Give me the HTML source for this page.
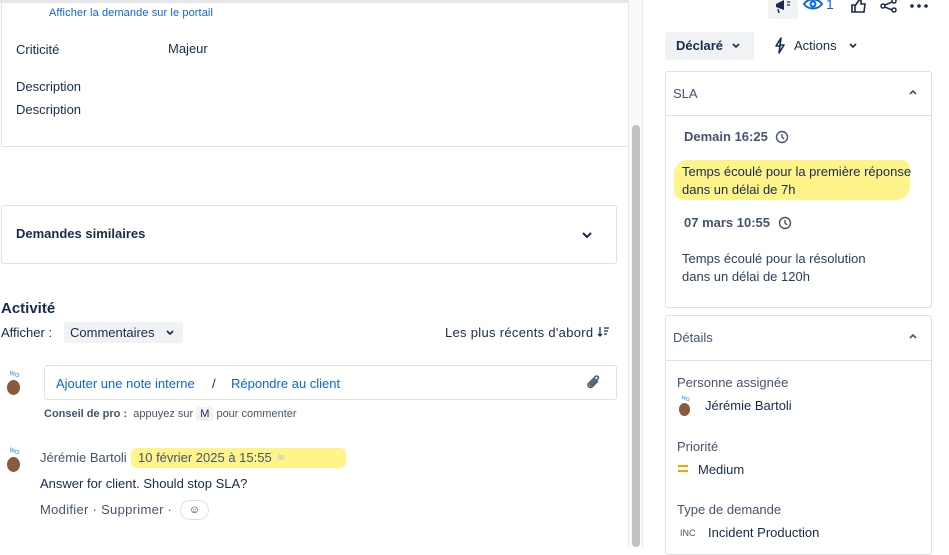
<!DOCTYPE html>
<html><head><meta charset="utf-8"><style>
*{box-sizing:border-box;margin:0;padding:0}
body{width:949px;height:547px;overflow:hidden;background:#fff;font-family:"Liberation Sans",sans-serif;color:#172b4d;position:relative;font-size:13px}
.a{position:absolute;white-space:nowrap}
.card{position:absolute;border:1px solid #dfe1e6;border-radius:3px;background:#fff}
.blue{color:#0c66e4}
.mut{color:#44546f}
.hl{background:#fff48a;border-radius:6px}
</style></head><body>
<div class="a" style="left:0;top:0;width:628px;height:3px;background:#e6e7ea"></div>
<div class="a" style="left:1px;top:3px;width:1px;height:143px;background:#dfe1e6"></div>
<div class="a" style="left:1px;top:146px;width:627px;height:1px;background:#dfe1e6"></div>
<div class="a blue" style="left:49px;top:7px;font-size:11px;letter-spacing:0.1px">Afficher la demande sur le portail</div>
<div class="a" style="left:16px;top:42px">Criticité</div>
<div class="a" style="left:168px;top:41px">Majeur</div>
<div class="a" style="left:16px;top:79px">Description</div>
<div class="a" style="left:16px;top:102px">Description</div>
<div class="a" style="left:628px;top:0;width:15px;height:547px;background:#fafafa;border-left:1px solid #e8e8e8;border-right:1px solid #e8e8e8"></div>
<div class="a" style="left:632px;top:125px;width:8px;height:422px;background:#c2c2c2;border-radius:4px"></div>
<div class="card" style="left:1px;top:205px;width:616px;height:59px"></div>
<div class="a" style="left:16px;top:226px;font-weight:bold">Demandes similaires</div>
<svg class="a" style="left:581px;top:230px" width="12" height="10" viewBox="0 0 12 10"><path d="M2 3l4 4 4-4" stroke="#172b4d" stroke-width="2" fill="none"/></svg>
<div class="a" style="left:1px;top:300px;font-size:15px;font-weight:bold">Activité</div>
<div class="a" style="left:1px;top:325px">Afficher :</div>
<div class="a" style="left:64px;top:322px;width:119px;height:21px;background:#f1f2f4;border-radius:3px"></div>
<div class="a" style="left:70px;top:325px">Commentaires</div>
<svg class="a" style="left:165px;top:329px" width="10" height="8" viewBox="0 0 10 8"><path d="M2 2l3 3 3-3" stroke="#172b4d" stroke-width="1.6" fill="none"/></svg>
<div class="a" style="left:445px;top:325px;letter-spacing:0.3px">Les plus récents d'abord</div>
<svg class="a" style="left:597px;top:326px" width="13" height="12" viewBox="0 0 13 12"><path d="M3 1v9M1 8l2 2 2-2M7 2h5M7 5h4M7 8h3" stroke="#172b4d" stroke-width="1.3" fill="none"/></svg>
<div class="a" style="left:5px;top:372px;width:18px;height:24px"><div style="position:absolute;left:2px;top:8px;width:13px;height:15px;border-radius:50%;background:#8a5a3c"></div><div style="position:absolute;left:4px;top:0;font-size:6px;color:#5aa7e8;font-weight:bold;transform:rotate(20deg)">WO</div></div>
<div class="card" style="left:44px;top:365px;width:573px;height:35px"></div>
<div class="a blue" style="left:56px;top:376px">Ajouter une note interne</div>
<div class="a" style="left:212px;top:376px">/</div>
<div class="a blue" style="left:231px;top:376px">Répondre au client</div>
<svg class="a" style="left:585px;top:374px" width="18" height="18" viewBox="0 0 18 18"><path d="M13 7l-6 6a2.5 2.5 0 01-3.5-3.5l7-7a1.7 1.7 0 012.4 2.4l-6.5 6.5a.8.8 0 01-1.2-1.2l5.5-5.5" stroke="#44546f" stroke-width="1.5" fill="none"/></svg>
<div class="a mut" style="left:44px;top:408px;font-size:11px"><b>Conseil de pro :</b>&nbsp; appuyez sur <span style="background:#f1f2f4;padding:1px 4px;border-radius:2px;color:#172b4d">M</span> pour commenter</div>
<div class="a" style="left:5px;top:449px;width:18px;height:24px"><div style="position:absolute;left:2px;top:8px;width:13px;height:15px;border-radius:50%;background:#8a5a3c"></div><div style="position:absolute;left:4px;top:0;font-size:6px;color:#5aa7e8;font-weight:bold;transform:rotate(20deg)">WO</div></div>
<div class="a mut" style="left:40px;top:450px">Jérémie Bartoli</div>
<div class="a hl" style="left:131px;top:448px;width:215px;height:20px"></div>
<div class="a mut" style="left:138px;top:450px">10 février 2025 à 15:55 <span style="color:#c9cfd6">⚭</span></div>
<div class="a" style="left:40px;top:476px">Answer for client. Should stop SLA?</div>
<div class="a mut" style="left:40px;top:502px;letter-spacing:0.3px">Modifier · Supprimer ·</div>
<div class="a" style="left:180px;top:500px;width:29px;height:20px;border:1px solid #dfe1e6;border-radius:10px;text-align:center;font-size:11px;line-height:18px">☺</div>
<div class="a" style="left:768px;top:0;width:30px;height:19px;background:#f1f2f4;border-radius:3px"></div>
<svg class="a" style="left:774px;top:0" width="18" height="15" viewBox="0 0 18 15"><path d="M2 4l8-4v10l-8-3z" fill="#172b4d"/><path d="M4 9l1 4" stroke="#172b4d" stroke-width="1.5"/><path d="M13 2h3M13 5h3" stroke="#172b4d" stroke-width="1.2"/></svg>
<svg class="a" style="left:803px;top:0" width="22" height="12" viewBox="0 0 22 12"><path d="M1 4c4-6 14-6 18 0c-4 6-14 6-18 0z" stroke="#0c66e4" stroke-width="2" fill="none"/><circle cx="10" cy="4" r="2.5" stroke="#0c66e4" stroke-width="2" fill="none"/></svg>
<div class="a blue" style="left:826px;top:-4px;font-size:14px">1</div>
<svg class="a" style="left:851px;top:0" width="16" height="13" viewBox="0 0 16 13"><path d="M1 5h3v7H1zM4 6l4-6h2v4h4l-1 8H4" stroke="#172b4d" stroke-width="1.6" fill="none"/></svg>
<svg class="a" style="left:880px;top:0" width="18" height="13" viewBox="0 0 18 13"><circle cx="14" cy="1" r="2" stroke="#172b4d" stroke-width="1.5" fill="none"/><circle cx="3" cy="6" r="2" stroke="#172b4d" stroke-width="1.5" fill="none"/><circle cx="14" cy="10" r="2" stroke="#172b4d" stroke-width="1.5" fill="none"/><path d="M5 5l7-3M5 7l7 3" stroke="#172b4d" stroke-width="1.5"/></svg>
<svg class="a" style="left:909px;top:3px" width="20" height="6" viewBox="0 0 20 6"><circle cx="3" cy="3" r="1.8" fill="#172b4d"/><circle cx="10" cy="3" r="1.8" fill="#172b4d"/><circle cx="17" cy="3" r="1.8" fill="#172b4d"/></svg>
<div class="a" style="left:665px;top:32px;width:89px;height:28px;background:#f1f2f4;border-radius:3px"></div>
<div class="a" style="left:676px;top:38px;font-weight:bold">Déclaré</div>
<svg class="a" style="left:731px;top:42px" width="10" height="8" viewBox="0 0 10 8"><path d="M2 2l3 3 3-3" stroke="#172b4d" stroke-width="1.6" fill="none"/></svg>
<svg class="a" style="left:773px;top:37px" width="14" height="17" viewBox="0 0 14 17"><path d="M8 1L3 9h4l-1 7 5-8H7z" stroke="#172b4d" stroke-width="1.6" fill="none" stroke-linejoin="round"/></svg>
<div class="a" style="left:794px;top:38px">Actions</div>
<svg class="a" style="left:848px;top:42px" width="10" height="8" viewBox="0 0 10 8"><path d="M2 2l3 3 3-3" stroke="#172b4d" stroke-width="1.6" fill="none"/></svg>
<div class="card" style="left:665px;top:71px;width:267px;height:237px"></div>
<div class="a" style="left:665px;top:115px;width:267px;height:1px;background:#dfe1e6"></div>
<div class="a mut" style="left:673px;top:86px">SLA</div>
<svg class="a" style="left:908px;top:89px" width="10" height="8" viewBox="0 0 10 8"><path d="M2 5l3-3 3 3" stroke="#44546f" stroke-width="1.6" fill="none"/></svg>
<div class="a mut" style="left:684px;top:129px;font-weight:bold">Demain 16:25</div>
<svg class="a" style="left:775px;top:130px" width="14" height="14" viewBox="0 0 14 14"><circle cx="7" cy="7" r="5.5" stroke="#44546f" stroke-width="1.4" fill="none"/><path d="M7 4v3l2 2" stroke="#44546f" stroke-width="1.4" fill="none"/></svg>
<div class="a hl" style="left:674px;top:160px;width:236px;height:40px;border-radius:14px 8px 14px 10px"></div>
<div class="a" style="left:682px;top:163px;line-height:18px">Temps écoulé pour la première réponse<br>dans un délai de 7h</div>
<div class="a mut" style="left:684px;top:215px;font-weight:bold">07 mars 10:55</div>
<svg class="a" style="left:778px;top:216px" width="14" height="14" viewBox="0 0 14 14"><circle cx="7" cy="7" r="5.5" stroke="#44546f" stroke-width="1.4" fill="none"/><path d="M7 4v3l2 2" stroke="#44546f" stroke-width="1.4" fill="none"/></svg>
<div class="a" style="left:682px;top:250px;line-height:18px;color:#2c3e5d">Temps écoulé pour la résolution<br>dans un délai de 120h</div>
<div class="card" style="left:665px;top:315px;width:267px;height:240px"></div>
<div class="a" style="left:665px;top:360px;width:267px;height:1px;background:#dfe1e6"></div>
<div class="a mut" style="left:673px;top:330px">Détails</div>
<svg class="a" style="left:908px;top:333px" width="10" height="8" viewBox="0 0 10 8"><path d="M2 5l3-3 3 3" stroke="#44546f" stroke-width="1.6" fill="none"/></svg>
<div class="a mut" style="left:677px;top:375px">Personne assignée</div>
<div class="a" style="left:677px;top:396px;width:18px;height:22px"><div style="position:absolute;left:2px;top:7px;width:11px;height:13px;border-radius:50%;background:#8a5a3c"></div><div style="position:absolute;left:4px;top:0;font-size:5px;color:#5aa7e8;font-weight:bold;transform:rotate(20deg)">WO</div></div>
<div class="a" style="left:705px;top:398px">Jérémie Bartoli</div>
<div class="a mut" style="left:677px;top:439px">Priorité</div>
<div class="a" style="left:678px;top:465px;width:10px;height:2px;background:#f5a300"></div>
<div class="a" style="left:678px;top:470px;width:10px;height:2px;background:#f5a300"></div>
<div class="a" style="left:698px;top:462px">Medium</div>
<div class="a mut" style="left:677px;top:502px">Type de demande</div>
<div class="a" style="left:680px;top:528px;font-size:9px;color:#44546f">INC</div>
<div class="a" style="left:708px;top:525px">Incident Production</div>
</body></html>
